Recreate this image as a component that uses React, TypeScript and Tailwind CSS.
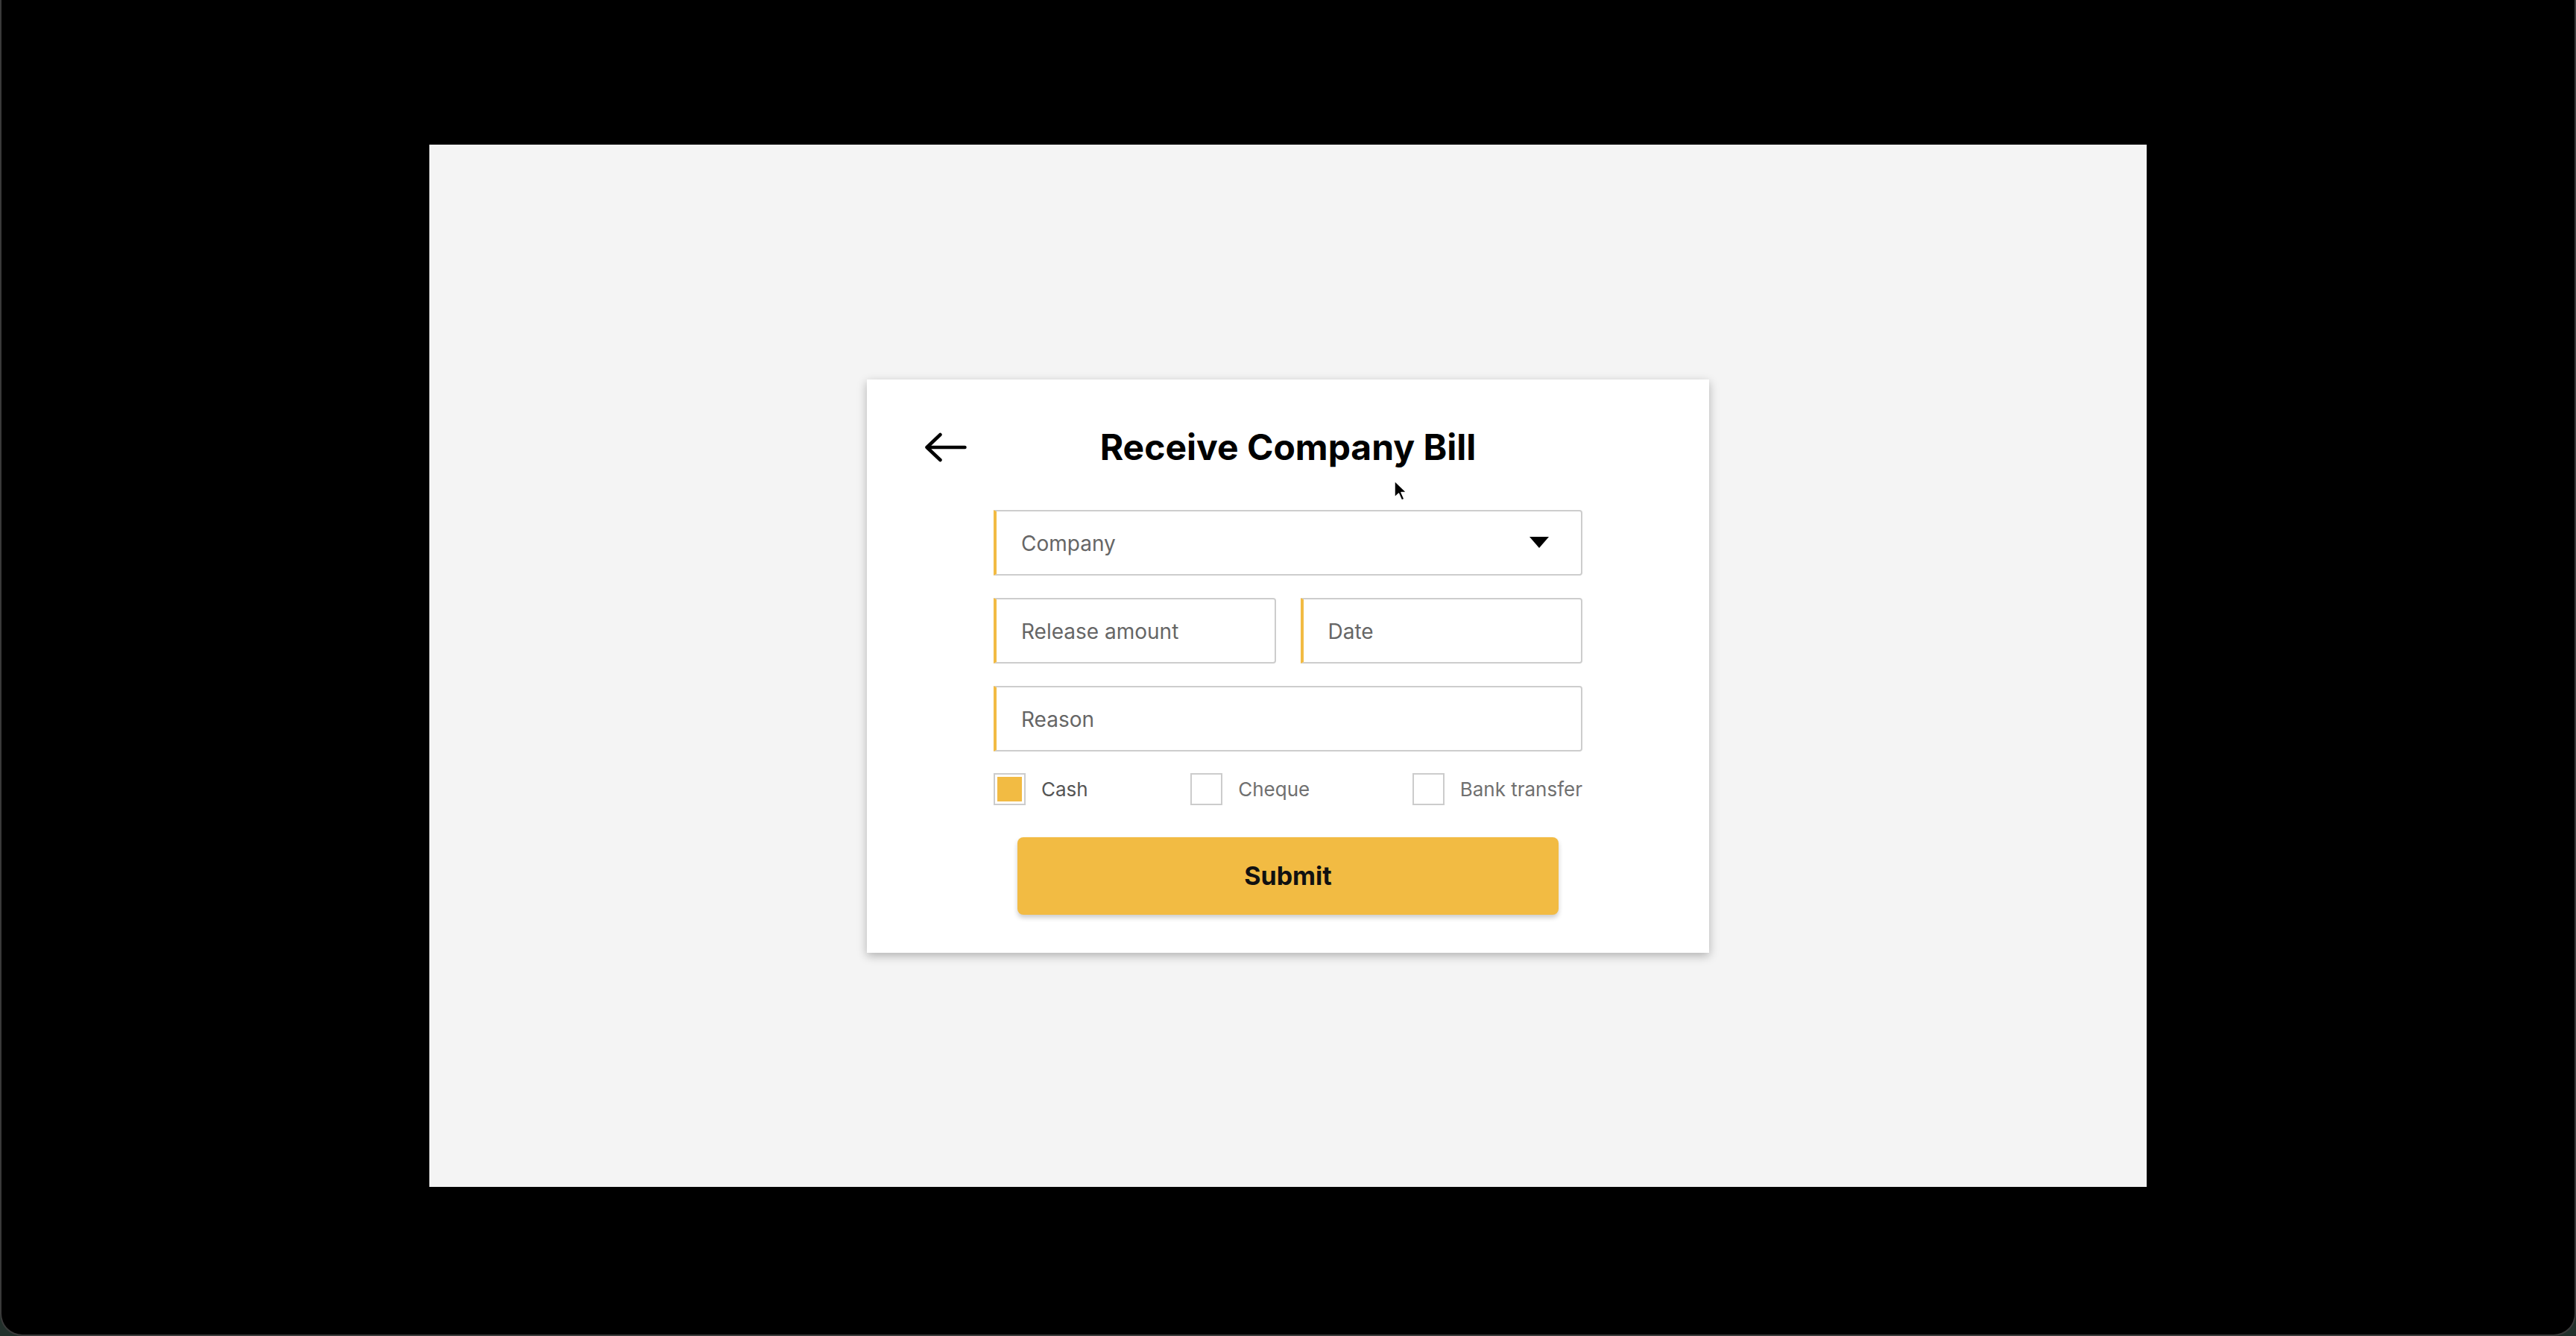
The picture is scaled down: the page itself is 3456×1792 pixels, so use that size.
import React, { useState } from 'react';

type PaymentMethod = 'cash' | 'cheque' | 'bank';

const methods: { id: PaymentMethod; label: string }[] = [
  { id: 'cash', label: 'Cash' },
  { id: 'cheque', label: 'Cheque' },
  { id: 'bank', label: 'Bank transfer' },
];

const BackArrow = () => (
  <svg width="60" height="44" viewBox="0 0 60 44" fill="none">
    <path
      d="M22.5 5 L4.5 22 L22.5 39 M4.5 22 H55.5"
      stroke="#000"
      strokeWidth="4.5"
      strokeLinecap="round"
      strokeLinejoin="round"
    />
  </svg>
);

const Field: React.FC<{ placeholder: string; dropdown?: boolean }> = ({ placeholder, dropdown }) => (
  <div className="h-[88px] flex items-center bg-white border-2 border-[#cdcdcd] border-l-4 border-l-[#f2bb43] rounded-r-[4px] pl-[33px] pr-[43px]">
    <span className="flex-1 text-[28px] text-[#666666] leading-none pt-[2px]">{placeholder}</span>
    {dropdown && (
      <svg width="26" height="15" viewBox="0 0 26 15">
        <path d="M0 0 H26 L13 15 Z" fill="#000" />
      </svg>
    )}
  </div>
);

export default function App() {
  const [method, setMethod] = useState<PaymentMethod>('cash');

  return (
    <div className="relative w-[3456px] h-[1792px] bg-[#22302b] font-['Inter',sans-serif]">
      <div className="w-full h-full bg-black rounded-b-[30px] border-x-2 border-b-2 border-[#3a3a3a] pt-[194px] flex justify-center items-start">
        {/* Canvas */}
        <div className="w-[2304px] h-[1398px] bg-[#f4f4f4] flex items-center justify-center">
          {/* Card */}
          <div className="w-[1130px] h-[769px] bg-white shadow-[0_4px_12px_rgba(0,0,0,0.28)] pt-[62px]">
            {/* Header */}
            <div className="flex items-center px-[76px] h-[58px]">
              <button className="w-[60px] h-[44px] flex items-center" aria-label="Back">
                <BackArrow />
              </button>
              <h1 className="flex-1 text-center text-[48px] font-bold text-black leading-[58px]">
                Receive Company Bill
              </h1>
              <div className="w-[60px]" />
            </div>

            {/* Form */}
            <div className="px-[170px] mt-[55px] flex flex-col">
              <Field placeholder="Company" dropdown />
              <div className="grid grid-cols-2 gap-[33px] mt-[30px]">
                <Field placeholder="Release amount" />
                <Field placeholder="Date" />
              </div>
              <div className="mt-[30px]">
                <Field placeholder="Reason" />
              </div>

              {/* Payment methods */}
              <div className="flex justify-between items-center mt-[29px]">
                {methods.map((m) => (
                  <button
                    key={m.id}
                    onClick={() => setMethod(m.id)}
                    className="flex items-center gap-[21px]"
                  >
                    <span className="w-[43px] h-[43px] border-2 border-[#cccccc] p-[3px] bg-white">
                      {method === m.id && <span className="block w-full h-full bg-[#f2bb43]" />}
                    </span>
                    <span
                      className={
                        method === m.id
                          ? 'text-[26px] text-[#555555] leading-none pt-[2px]'
                          : 'text-[26px] text-[#707070] leading-none pt-[2px]'
                      }
                    >
                      {m.label}
                    </span>
                  </button>
                ))}
              </div>

              <button className="mt-[43px] mx-[32px] h-[104px] rounded-[8px] bg-[#f2bb43] shadow-[0_4px_6px_rgba(0,0,0,0.2)] text-[34px] font-bold text-[#111111]">
                Submit
              </button>
            </div>
          </div>
        </div>
      </div>

      {/* Mouse pointer */}
      <svg
        className="absolute left-[1869px] top-[643px]"
        width="20"
        height="32"
        viewBox="0 0 20 32"
      >
        <path
          d="M2 2 L2 24 L7.5 19 L11.5 28 L15 26.5 L11 17.5 L18 17.5 Z"
          fill="#000"
          stroke="#fff"
          strokeWidth="1.5"
          strokeLinejoin="round"
        />
      </svg>
    </div>
  );
}
